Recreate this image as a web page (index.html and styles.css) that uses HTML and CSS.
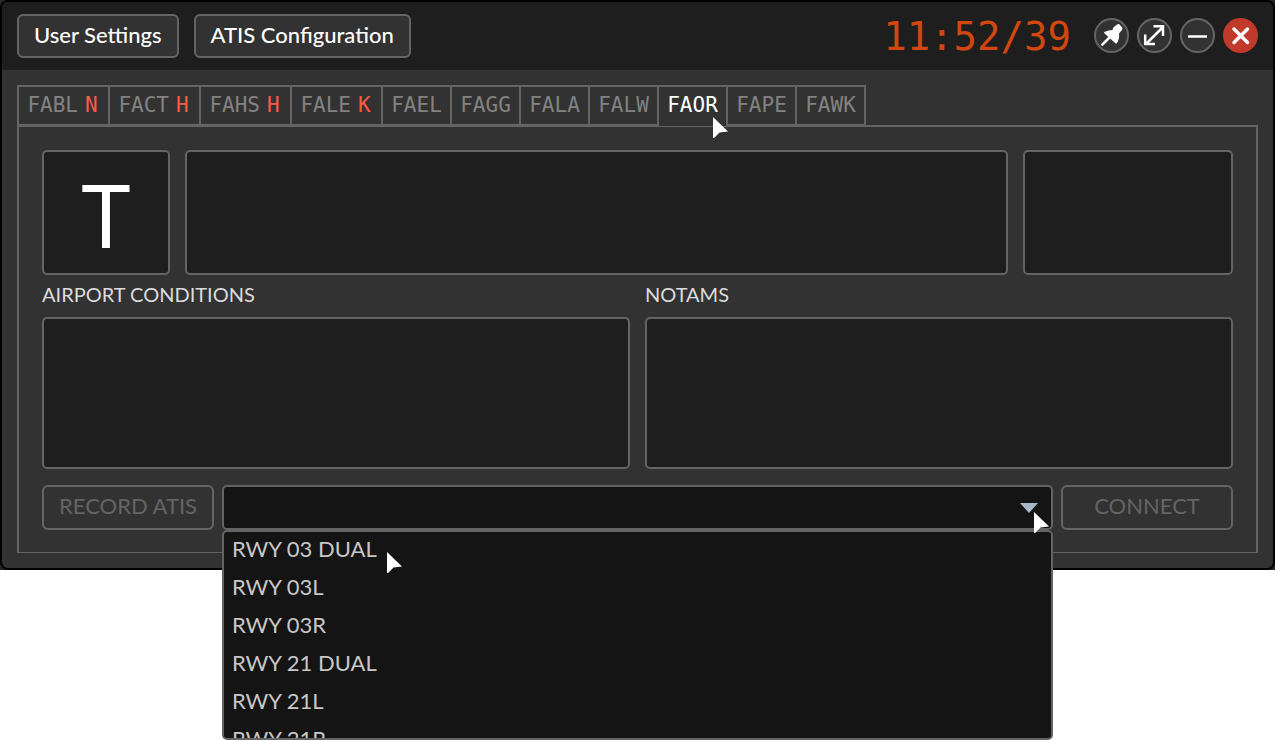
FILE: index.html
```
<!DOCTYPE html>
<html lang="en">
<head>
<meta charset="utf-8">
<title>ATIS</title>
<link rel="stylesheet" href="styles.css">
</head>
<body>
<div class="stage">
<main class="window">
  <header class="titlebar">
    <button class="btn">User Settings</button>
    <button class="btn">ATIS Configuration</button>
    <time class="clock">11:52/39</time>
    <div class="controls">
      <button class="round" aria-label="Pin"><svg viewBox="0 0 35 35"><path d="M25.300 6.300 28.200 9.600Q29 10.800 28 12L25 15.500Q25.800 20.500 23 25Q22.300 26 21.400 25.200L10.300 15.300Q9.600 14.300 10.700 13.700Q14.500 12 18.500 12L19.400 9.500Q22 7.200 23.600 6.200Q24.500 5.600 25.300 6.300z"/><path class="line" d="M7.500 27.300 16 19"/></svg></button>
      <button class="round" aria-label="Resize"><svg viewBox="0 0 35 35"><path class="line" d="M9 26 26 9M16.500 8.200H26V18M8.200 16.500V26H18"/></svg></button>
      <button class="round" aria-label="Minimize"><svg viewBox="0 0 35 35"><path class="line" d="M8 18.500H27"/></svg></button>
      <button class="round close" aria-label="Close"><svg viewBox="0 0 35 35"><path class="cross" d="M11 11 24.500 24.500M24.500 11 11 24.500"/></svg></button>
    </div>
  </header>
  <div class="content">
    <nav class="tabs" role="tablist">
      <button class="tab wide" role="tab">FABL <b>N</b></button>
      <button class="tab wide" role="tab">FACT <b>H</b></button>
      <button class="tab wide" role="tab">FAHS <b>H</b></button>
      <button class="tab wide" role="tab">FALE <b>K</b></button>
      <button class="tab" role="tab">FAEL</button>
      <button class="tab" role="tab">FAGG</button>
      <button class="tab" role="tab">FALA</button>
      <button class="tab" role="tab">FALW</button>
      <button class="tab active" role="tab" aria-selected="true">FAOR</button>
      <button class="tab" role="tab">FAPE</button>
      <button class="tab" role="tab">FAWK</button>
    </nav>
    <section class="panel">
      <div class="summary">
        <div class="box letter">T</div>
        <div class="box"></div>
        <div class="box"></div>
      </div>
      <div class="notes">
        <div class="field">
          <label for="conditions">AIRPORT CONDITIONS</label>
          <textarea class="box" id="conditions"></textarea>
        </div>
        <div class="field">
          <label for="notams">NOTAMS</label>
          <textarea class="box" id="notams"></textarea>
        </div>
      </div>
      <div class="actions">
        <button class="btn" disabled>RECORD ATIS</button>
        <div class="combo">
          <select class="select" aria-label="Preset"><option></option></select>
          <svg class="arrow" viewBox="0 0 18 10"><path d="M0 0H18L9 10z"/></svg>
          <ul class="menu" role="listbox">
            <li role="option">RWY 03 DUAL</li>
            <li role="option">RWY 03L</li>
            <li role="option">RWY 03R</li>
            <li role="option">RWY 21 DUAL</li>
            <li role="option">RWY 21L</li>
            <li role="option">RWY 21R</li>
          </ul>
          <svg class="cursor on-arrow" viewBox="0 0 16 21"><path d="M0 0 15 14.500 6.500 15.500 1 21H0z"/></svg>
          <svg class="cursor on-item" viewBox="0 0 16 21"><path d="M0 0 15 14.500 6.500 15.500 1 21H0z"/></svg>
        </div>
        <button class="btn" disabled>CONNECT</button>
      </div>
    </section>
    <svg class="cursor on-tab" viewBox="0 0 16 21"><path d="M0 0 15 14.500 6.500 15.500 1 21H0z"/></svg>
  </div>
</main>
</div>
</body>
</html>
```
FILE: styles.css
```
* { box-sizing: border-box; }
body {
  min-height: 100vh;
  margin: 0;
  background: #fff;
  font-family: Lato, "Open Sans", sans-serif;
  font-size: 22px;
}
button { font: inherit; }
.stage { background: #25272c; }
.window {
  border: 2px solid #000;
  border-radius: 8px;
  background: #323232;
}
.titlebar {
  display: flex;
  align-items: center;
  gap: 15px;
  height: 68px;
  padding: 0 15px;
  background: #1e1e1e;
  border-radius: 6px 6px 0 0;
}
.btn {
  height: 44px;
  padding: 0 15px 4px;
  border: 2px solid #646464;
  border-radius: 6px;
  background: #323232;
  color: #fff;
  font-weight: 500;
  white-space: nowrap;
}
.clock {
  margin-left: auto;
  color: #d2460f;
  font: 39px "DejaVu Sans Mono", monospace;
}
.controls { display: flex; gap: 8px; margin-left: 8px; padding-bottom: 1px; }
.round {
  width: 35px;
  height: 35px;
  padding: 0;
  border: 0;
  border-radius: 50%;
  background: #323232;
  box-shadow: inset 0 0 0 2px #646464;
}
.round svg { display: block; fill: #fff; }
.round .line { fill: none; stroke: #fff; stroke-width: 2.500; }
.round.close { background: #c0392b; box-shadow: none; }
.round .cross { fill: none; stroke: #fff; stroke-width: 3.500; stroke-linecap: round; }
.content { position: relative; padding: 15px; }
.tabs { display: flex; }
.tab {
  width: 69px;
  height: 41px;
  padding: 0 0 1px;
  border: 2px solid #646464;
  border-right: 0;
  background: #323232;
  color: #828282;
  font: 21px "DejaVu Sans Mono", monospace;
  white-space: nowrap;
}
.tab:last-child { width: 71px; border-right: 2px solid #646464; }
.tab.wide {
  display: flex;
  align-items: center;
  justify-content: center;
  gap: 7px;
  width: 91px;
  padding-right: 2px;
}
.tab b { color: #ff5a46; font-weight: 400; }
.tab.active {
  position: relative;
  padding-bottom: 3px;
  border-bottom: 0;
  color: #fff;
}
.panel {
  margin-top: -1px;
  padding: 23px 23px 22px;
  border: 2px solid #646464;
  border-bottom-width: 1px;
}
.box {
  display: block;
  border: 2px solid #646464;
  border-radius: 5px;
  background: #1e1e1e;
}
.summary {
  display: grid;
  grid-template-columns: 128px 1fr 210px;
  gap: 15px;
  height: 125px;
}
.letter {
  padding-top: 7px;
  color: #fff;
  font: 400 88px/110px "Noto Sans", sans-serif;
  text-align: center;
}
.notes { display: grid; grid-template-columns: 1fr 1fr; gap: 15px; }
.field label {
  display: block;
  padding-bottom: 4px;
  color: #dcdcdc;
  font-size: 20px;
  line-height: 38px;
}
.field .box { width: 100%; height: 152px; resize: none; }
.actions {
  display: grid;
  grid-template-columns: 172px 1fr 172px;
  gap: 8px;
  margin-top: 16px;
}
.actions .btn { height: 45px; color: #646464; font-weight: 400; }
.combo { position: relative; }
.select {
  display: block;
  width: 100%;
  height: 45px;
  appearance: none;
  border: 2px solid #646464;
  border-radius: 5px;
  background: #141414;
}
.arrow {
  position: absolute;
  top: 18px;
  right: 15px;
  width: 18px;
  height: 10px;
  fill: #a9b8c8;
}
.menu {
  position: absolute;
  top: 45px;
  left: 0;
  right: 0;
  height: 210px;
  margin: 0;
  padding: 0 8px;
  overflow: hidden;
  list-style: none;
  border: 2px solid #646464;
  border-radius: 5px;
  background: #141414;
  color: #c8c8c8;
}
.menu li { height: 38px; line-height: 34px; }
.cursor { position: absolute; width: 16px; height: 21px; fill: #fff; }
.on-arrow { top: 27px; right: 3px; }
.on-item { top: 67px; left: 165px; }
.on-tab { top: 47px; left: 711px; }
```
